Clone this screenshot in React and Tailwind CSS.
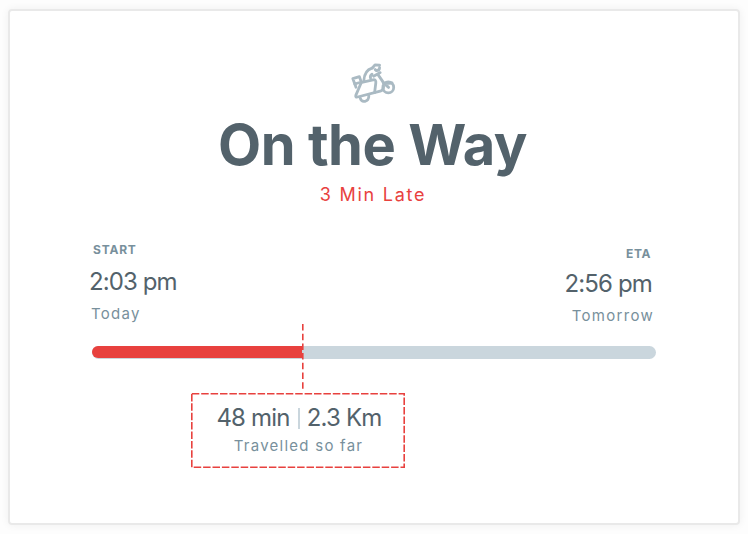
function ScooterIcon() {
  return (
    <svg className="mr-[2px] block h-[42px] w-[48px]" viewBox="0 0 48 42" fill="none" stroke="#aabac3" strokeWidth="2.8" strokeLinecap="round" strokeLinejoin="round">
      <path d="M3.8 17.6 L10.4 15.6 L12.2 21 L5.8 23 Z" />
      <path d="M5.8 23 L7 26.2 M12.8 21.3 L24 18.8 Q27.3 18.3 26.8 22 L25.6 31.6" />
      <path d="M12 22.2 L6.8 34.4 Q6.3 36.5 8.6 36 L31.2 30.2 Q34.4 29 34.6 25.6" />
      <path d="M11.2 37 Q12.2 41 16 40.3 Q20 39.4 19.8 34.6" />
      <path d="M14.8 19.8 Q15.4 9.4 23 7.2 M23 13.2 Q20.6 15 21.6 17.2 M24.6 15.2 L31.2 11.6 M29 13.6 L35.2 22.6" />
      <path d="M23.4 7 L26 3.8 L30.6 4.2 M30.6 6.6 Q30.4 9.6 27.4 9.6 L26.2 8.6" />
      <circle cx="39.3" cy="26.4" r="5.4" />
      <path d="M34.2 21.6 L39.6 26.4 M36.4 22.6 L43 22" />
    </svg>
  );
}

export default function App() {
  return (
    <div className="h-[534px] w-[748px] overflow-hidden bg-[#fdfdfd] pt-[9px] pl-[8px] font-[Inter,sans-serif]">
      <main className="flex h-[516px] w-[732px] flex-col rounded-[4px] border-2 border-[#e9e9e9] bg-white shadow-[0_0_8px_rgba(0,0,0,0.06)]">
        <header className="flex flex-col items-center pt-[50px] whitespace-nowrap">
          <ScooterIcon />
          <h1 className="mt-[10px] mr-[3px] text-[56px] leading-[64px] font-bold tracking-[-0.45px] text-[#53626b]">On the Way</h1>
          <p className="mt-[6px] mr-[2px] text-[18px] leading-[24px] tracking-[1.75px] text-[#e8413e]">3 Min Late</p>
        </header>
        <section className="mt-[35px] flex justify-between pr-[84px] pl-[81px] whitespace-nowrap">
          <div className="flex flex-col items-start">
            <span className="ml-[2px] text-[12px] leading-[16px] font-bold tracking-[0.8px] text-[#78909c]">START</span>
            <span className="mt-[8px] -ml-[2px] text-[24px] leading-[32px] tracking-[-0.9px] text-[#53626b]">2:03 pm</span>
            <span className="mt-[6px] text-[15px] leading-[20px] tracking-[1.3px] text-[#78909c]">Today</span>
          </div>
          <div className="flex flex-col items-end pt-1">
            <span className="mr-[3px] text-[12px] leading-[16px] font-bold tracking-[0.6px] text-[#78909c]">ETA</span>
            <span className="mt-[6px] mr-[2px] text-[24px] leading-[32px] tracking-[-0.85px] text-[#53626b]">2:56 pm</span>
            <span className="mt-[6px] text-[15px] leading-[20px] tracking-[1.3px] text-[#78909c]">Tomorrow</span>
          </div>
        </section>
        <section className="relative mt-[20px] ml-[82px] h-[13px] w-[564px] rounded-full bg-[#cad6dd]">
          <div className="h-[12px] w-[210px] rounded-l-full bg-[#e8413e]" />
          <svg className="absolute top-[-22px] left-[210px] h-[65px] w-[2px]" viewBox="0 0 2 65">
            <path d="M0.8 0V65" stroke="#e8413e" strokeWidth="1.6" strokeDasharray="6.5 3.2" />
          </svg>
        </section>
        <section className="relative mt-[34px] ml-[181px] flex h-[75px] w-[214px] flex-col items-center pt-[9px] whitespace-nowrap">
          <svg className="absolute inset-0 h-full w-full" viewBox="0 0 214 75" fill="none">
            <rect x="0.8" y="0.8" width="212.4" height="73.4" stroke="#e8413e" strokeWidth="1.6" strokeDasharray="7.5 1.9" />
          </svg>
          <div className="ml-[2px] flex items-center text-[24px] leading-[32px] tracking-[-0.8px] text-[#53626b]">
            <span>48 min</span>
            <span className="mr-[7px] ml-[8px] h-[21px] w-[2px] bg-[#cad6dd]" />
            <span>2.3 Km</span>
          </div>
          <p className="mt-[2px] ml-px text-[15px] leading-[20px] tracking-[1.25px] text-[#78909c]">Travelled so far</p>
        </section>
      </main>
    </div>
  );
}
